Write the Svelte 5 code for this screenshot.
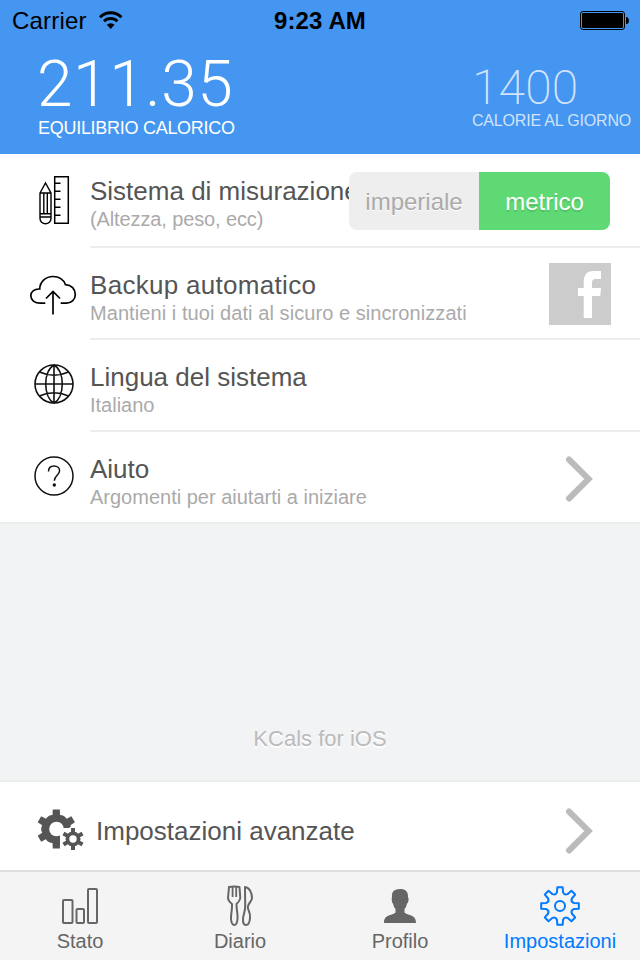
<script>
  function ring(cx, cy, r, a) {
    return (cx + r * Math.cos(a)).toFixed(2) + ' ' + (cy + r * Math.sin(a)).toFixed(2);
  }

  function gear(cx, cy, n, outer, inner, tip, root, valley = inner) {
    let d = '';
    for (let i = 0; i < n; i++) {
      const a = (i * 2 * Math.PI) / n - Math.PI / 2;
      const half = Math.PI / n;
      d += (i ? 'L' : 'M') + ring(cx, cy, inner, a - root);
      d += 'L' + ring(cx, cy, outer, a - tip);
      d += 'L' + ring(cx, cy, outer, a + tip);
      d += 'L' + ring(cx, cy, inner, a + root);
      d += 'Q' + ring(cx, cy, valley, a + half) + ' ' + ring(cx, cy, inner, a + 2 * half - root);
    }
    return d + 'Z';
  }

  const bigGear = gear(56.3, 829, 6, 19.8, 14.6, 0.18, 0.26, 16.2);
  const smallGear = gear(73, 839, 6, 11.2, 7.2, 0.18, 0.28, 8.2);
  const tabGear = gear(560, 906, 8, 19, 14, 0.14, 0.22, 11.5);
</script>

<div class="screen">
  <header>
    <div class="status">
      <div class="carrier">
        <span>Carrier</span>
        <svg width="26" height="20" viewBox="98 10 26 20">
          <path d="M100 17.2a15.2 15.2 0 0 1 21.4 0" fill="none" stroke="#000" stroke-width="3" />
          <path d="M104 21.2a9.6 9.6 0 0 1 13.4 0" fill="none" stroke="#000" stroke-width="2.8" />
          <path d="M106.8 24.8a5.6 5.6 0 0 1 7.8 0L110.7 29z" />
        </svg>
      </div>
      <div class="time">9:23 AM</div>
      <div class="battery">
        <svg width="52" height="20" viewBox="578 10 52 20">
          <rect x="580.5" y="11.5" width="44" height="18" rx="2.5" fill="none" stroke="#000" />
          <rect x="582" y="13" width="41" height="15" rx="1.2" />
          <path d="M626 17h1q2 1 2 3.500t-2 3.500h-1z" />
        </svg>
      </div>
    </div>
    <div class="figures">
      <div class="balance">
        <div class="value">211.35</div>
        <div class="label">EQUILIBRIO CALORICO</div>
      </div>
      <div class="daily">
        <div class="value">1400</div>
        <div class="label">CALORIE AL GIORNO</div>
      </div>
    </div>
  </header>

  <section class="list">
    <div class="row first">
      <svg class="icon" width="90" height="92" viewBox="0 154 90 92" fill="none" stroke="#000" stroke-width="1.5">
        <path d="M40 193L45.500 183L51 193V218.500a5.500 5.300 0 0 1-11 0ZM40 193H51M40 213.700H51M40 217H51M43.800 193V213.700M47.300 193V213.700" stroke-width="1.4" />
        <path d="M54.700 176.700H68.300V223.300H54.700ZM54.700 183.300H60.500M54.700 191.300H60.500M54.700 199.300H60.500M54.700 207.300H60.500M54.700 215.300H60.500" />
      </svg>
      <div class="body">
        <div class="texts">
          <div class="title">Sistema di misurazione</div>
          <div class="sub s1">(Altezza, peso, ecc)</div>
        </div>
        <div class="segment">
          <div class="off">imperiale</div>
          <div class="on">metrico</div>
        </div>
      </div>
    </div>

    <div class="row">
      <svg class="icon" width="90" height="92" viewBox="0 248 90 92" fill="none" stroke="#000" stroke-width="1.7">
        <path d="M45.300 303.200H40.500C34.500 303.200 30.800 300 30.800 295.500C30.800 292 34 288.700 39.700 289C40 281.500 46 276.500 53 276.500C59 276.500 63.500 279.500 65.500 284.700C71.500 285 75.300 289 75.300 294.500C75.300 299.500 71.500 303.200 66.500 303.200H60.700" />
        <path d="M53 314.500V291.500M46 298.500L53 291.500L60 298.500" />
      </svg>
      <div class="body">
        <div class="texts">
          <div class="title t2">Backup automatico</div>
          <div class="sub s2">Mantieni i tuoi dati al sicuro e sincronizzati</div>
        </div>
        <svg class="facebook" width="62" height="62" viewBox="549 263 62 62">
          <path d="M549 263h62v62h-62z" fill="#ccc" />
          <path d="M583.700 318V296H578V288H583.700V282Q583.700 271 593.500 271H601V279H595.500Q592 279 592 282.500V288H601L600.300 296H592V318Z" fill="#fff" />
        </svg>
      </div>
    </div>

    <div class="row">
      <svg class="icon" width="90" height="92" viewBox="0 340 90 92" fill="none" stroke="#111" stroke-width="1.6">
        <circle cx="54" cy="384" r="19" />
        <path d="M35 384H73M54 365V403M54 365C43 371 43 397 54 403M54 365C65 371 65 397 54 403M39.500 372Q54 378.500 68.500 372M39.500 396Q54 389.500 68.500 396" />
      </svg>
      <div class="body">
        <div class="texts">
          <div class="title">Lingua del sistema</div>
          <div class="sub">Italiano</div>
        </div>
      </div>
    </div>

    <div class="row last">
      <svg class="icon" width="90" height="92" viewBox="0 432 90 92" fill="none" stroke="#111" stroke-width="1.5">
        <circle cx="54" cy="476" r="19" />
        <path d="M48.500 471.500C48.500 467.800 50.700 466 54 466C57.300 466 59.600 468 59.600 470.800C59.600 475 54.300 475.500 54.300 480.700" />
        <circle cx="54.300" cy="485" r="1.700" fill="#111" stroke="none" />
      </svg>
      <div class="body">
        <div class="texts">
          <div class="title">Aiuto</div>
          <div class="sub s4">Argomenti per aiutarti a iniziare</div>
        </div>
        <svg class="chevron" width="30" height="48" viewBox="564 455 30 48">
          <path d="M569 459.500L588.600 479L569 498.500" />
        </svg>
      </div>
    </div>
  </section>

  <div class="about">KCals for iOS</div>

  <div class="advanced">
    <svg class="icon" width="96" height="88" viewBox="0 782 96 88">
      <path d={bigGear} fill="#555" />
      <circle cx="56.500" cy="829" r="7.300" fill="#fff" />
      <path d="M60 828H69L77 822V850H60Z" fill="#fff" />
      <path d={smallGear} fill="#555" />
      <circle cx="73" cy="839" r="3.700" fill="#fff" />
    </svg>
    <div class="title">Impostazioni avanzate</div>
    <svg class="chevron" width="30" height="48" viewBox="564 455 30 48">
      <path d="M569 459.500L588.600 479L569 498.500" />
    </svg>
  </div>

  <nav>
    <div class="tab">
      <svg width="44" height="44" viewBox="58 884 44 44" fill="none" stroke="#666" stroke-width="2">
        <rect x="63" y="900" width="9.500" height="23" rx="1" />
        <rect x="76.500" y="909" width="7.500" height="14" rx="1" />
        <rect x="88" y="889" width="9" height="34" rx="1" />
      </svg>
      <span>Stato</span>
    </div>
    <div class="tab">
      <svg width="44" height="44" viewBox="218 884 44 44" fill="none" stroke="#666" stroke-width="2" stroke-linejoin="round">
        <path d="M229 887Q234 886.200 239.500 887L240.300 898Q240 901 236.500 904C236.500 911 238 914 237.500 919Q237 925 234.300 925Q231.500 925 231 919C230.700 914 232.300 911 232 904Q228.300 901 228 898Z" />
        <path d="M232.600 887V897M236.200 887V897" stroke-width="1.800" />
        <path d="M245 887C249.500 887.500 252 893 252 898C252 902 247.800 903 247.800 907C248 911 250.500 912 250 918Q249.500 925 246 925Q242.700 925 243 919C243.200 914 245.300 912 245.200 906Z" />
      </svg>
      <span>Diario</span>
    </div>
    <div class="tab">
      <svg width="44" height="44" viewBox="378 884 44 44" fill="#666">
        <path d="M400 889C405.500 889 408.500 891.500 408 897.500Q409 898 408.500 900.500Q408 903 407 903.500Q406.500 907 404.500 909V912.500C408 916 416 914 416 923H384C384 914 392 916 395.500 912.500V909Q393.500 907 393 903.500Q392 903 391.800 900.500Q391.500 898 392 897.500C391.500 893 393 889 400 889Z" />
      </svg>
      <span>Profilo</span>
    </div>
    <div class="tab active">
      <svg width="44" height="44" viewBox="538 884 44 44" fill="none" stroke="#007aff" stroke-width="2" stroke-linejoin="round">
        <path d={tabGear} />
        <circle cx="560" cy="906" r="5" />
      </svg>
      <span>Impostazioni</span>
    </div>
  </nav>
</div>

<style>
  :global(body) { margin: 0; background: #f2f3f5; }
  .screen {
    width: 640px;
    height: 960px;
    display: flex;
    flex-direction: column;
    overflow: hidden;
    background: #f2f3f5;
    font-family: "Liberation Sans", Arial, sans-serif;
    color: #555;
    white-space: nowrap;
  }
  svg { display: block; flex: none; }
  header { height: 154px; background: #4596f1; flex: none; }
  .status {
    height: 40px;
    display: grid;
    grid-template-columns: 1fr auto 1fr;
    color: #000;
    font-size: 24px;
    line-height: 28px;
  }
  .carrier { display: flex; padding: 7px 0 0 12px; }
  .carrier span { width: 86px; letter-spacing: 0.2px; }
  .carrier svg { margin-top: 3px; }
  .time { padding-top: 7px; font-weight: bold; font-size: 24px; letter-spacing: 0.1px; }
  .battery { display: flex; justify-content: flex-end; padding: 10px 10px 0 0; }
  .figures { display: flex; justify-content: space-between; color: #fff; }
  .balance { padding-left: 37px; }
  .balance .value { font: 300 64px/62px Roboto, sans-serif; letter-spacing: 0.6px; margin-top: 14px; }
  .balance .label { font-size: 18px; line-height: 20px; margin: 2px 0 0 1px; letter-spacing: -0.28px; }
  .daily { width: 168px; color: rgba(255, 255, 255, 0.75); }
  .daily .value { font: 200 48px/44px Roboto, sans-serif; letter-spacing: 0.2px; margin-top: 26px; }
  .daily .label { font-size: 16px; line-height: 18px; margin-top: 2px; letter-spacing: -0.18px; }
  .list { background: #fff; flex: none; }
  .row { display: flex; height: 92px; }
  .row.first { height: 94px; }
  .body {
    flex: 1;
    min-width: 0;
    box-sizing: border-box;
    display: flex;
    justify-content: space-between;
    border-bottom: 2px solid #ededed;
  }
  .last { box-sizing: border-box; border-bottom: 2px solid #ebecec; }
  .last .body { border: 0; }
  .texts { min-width: 0; padding-top: 22px; }
  .title { font-size: 26px; line-height: 30px; }
  .t2 { letter-spacing: 0.3px; }
  .sub { margin-top: 2px; font-size: 20px; line-height: 22px; color: #aaa; }
  .s1 { letter-spacing: -0.12px; }
  .s2 { letter-spacing: 0.07px; }
  .segment {
    flex: none;
    z-index: 1;
    display: flex;
    width: 261px;
    height: 58px;
    margin: 18px 30px 0 0;
    border-radius: 8px;
    overflow: hidden;
    font-size: 24px;
    line-height: 60px;
    text-align: center;
  }
  .off { width: 130px; background: #eee; color: #aaa; text-shadow: 0 1px 0 #fff; }
  .on { width: 131px; background: #5fd974; color: #fff; text-shadow: 0 2px 1px rgba(0, 0, 0, 0.12); }
  .facebook { margin: 15px 29px 0 0; }
  .chevron { fill: none; stroke: #bbb; stroke-width: 6; stroke-linecap: round; margin: 23px 46px 0 0; }
  .about {
    flex: 1;
    padding-top: 202px;
    font-size: 22px;
    line-height: 26px;
    text-align: center;
    color: #bbb;
    text-shadow: 0 2px 1px #fff;
  }
  .advanced { display: flex; height: 88px; flex: none; background: #fff; border-top: 2px solid #ebecec; }
  .advanced .title { flex: 1; padding-top: 34px; }
  .advanced .chevron { margin-top: 25px; }
  nav {
    flex: none;
    box-sizing: border-box;
    height: 90px;
    display: flex;
    border-top: 2px solid #dedede;
    background: #f4f4f4;
    color: #666;
  }
  .tab { width: 160px; display: flex; flex-direction: column; align-items: center; padding-top: 12px; }
  .tab span { margin-top: 2px; font-size: 20px; line-height: 22px; }
  .active { color: #007aff; }
</style>
